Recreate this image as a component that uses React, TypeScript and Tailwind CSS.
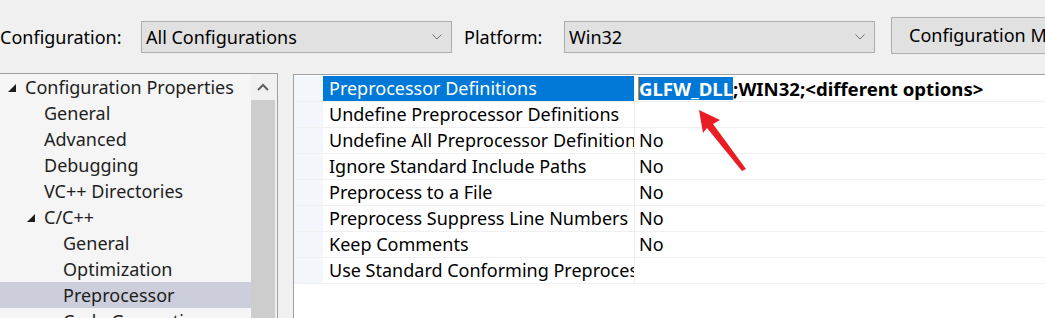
import { ReactNode } from 'react';

const font = { fontFamily: '"Noto Sans", "Open Sans", sans-serif' };

function Chevron() {
  return (
    <svg width="10" height="6" viewBox="0 0 10 6" fill="none" stroke="#707070" strokeWidth="1">
      <path d="M0.5 0.5L5 5L9.5 0.5" />
    </svg>
  );
}

function Expander() {
  return (
    <svg width="8" height="8" viewBox="0 0 8 8">
      <polygon points="8,0 8,8 0,8" fill="#1e1e1e" />
    </svg>
  );
}

function Select({ value }: { value: string }) {
  return (
    <div className="mt-[21px] h-[32px] w-[311px] shrink-0 bg-[#e1e1e1] border border-[#adadad] flex items-center justify-between pl-[4px] pr-[9px] text-[18px] text-black">
      <span>{value}</span>
      <Chevron />
    </div>
  );
}

function TreeRow({ indent, expander, selected, children }: { indent: string; expander?: string; selected?: boolean; children: ReactNode }) {
  return (
    <div className={`relative h-[26px] flex items-center text-[18px] text-[#1e1e1e] ${indent} ${selected ? 'bg-[#cccedb]' : ''}`}>
      {expander && (
        <span className={`absolute top-[10px] ${expander}`}>
          <Expander />
        </span>
      )}
      {children}
    </div>
  );
}

const props: [string, ReactNode][] = [
  ['Undefine Preprocessor Definitions', ''],
  ['Undefine All Preprocessor Definitions', 'No'],
  ['Ignore Standard Include Paths', 'No'],
  ['Preprocess to a File', 'No'],
  ['Preprocess Suppress Line Numbers', 'No'],
  ['Keep Comments', 'No'],
  ['Use Standard Conforming Preprocessor', ''],
];

export default function App() {
  return (
    <div className="relative w-[1045px] h-[318px] overflow-hidden bg-[#f0f0f0] text-black" style={font}>
      {/* toolbar */}
      <div className="h-[73px] flex items-start whitespace-nowrap">
        <div className="mt-[21px] h-[32px] w-[141px] shrink-0 flex items-center text-[18px]">Configuration:</div>
        <Select value="All Configurations" />
        <div className="mt-[21px] ml-[12px] h-[32px] w-[100px] shrink-0 flex items-center text-[18px]">Platform:</div>
        <Select value="Win32" />
        <div className="mt-[17px] ml-[16px] h-[37px] shrink-0 bg-[#e1e1e1] border border-[#adadad] flex items-center pl-[17px] pr-[17px] text-[18px]">
          Configuration Manager...
        </div>
      </div>

      <div className="flex h-[245px]">
        {/* tree */}
        <div className="w-[278px] shrink-0 flex border-t border-r border-[#a0a0a0] bg-[#f5f5f5]">
          <div className="w-[251px] shrink-0 whitespace-nowrap overflow-hidden">
            <TreeRow indent="pl-[25px]" expander="left-[8px]">Configuration Properties</TreeRow>
            <TreeRow indent="pl-[44px]">General</TreeRow>
            <TreeRow indent="pl-[44px]">Advanced</TreeRow>
            <TreeRow indent="pl-[44px]">Debugging</TreeRow>
            <TreeRow indent="pl-[44px]">VC++ Directories</TreeRow>
            <TreeRow indent="pl-[44px]" expander="left-[27px]">C/C++</TreeRow>
            <TreeRow indent="pl-[63px]">General</TreeRow>
            <TreeRow indent="pl-[63px]">Optimization</TreeRow>
            <TreeRow indent="pl-[63px]" selected>Preprocessor</TreeRow>
            <TreeRow indent="pl-[63px]">Code Generation</TreeRow>
          </div>
          <div className="w-[26px] shrink-0 bg-[#f0f0f0] flex flex-col">
            <div className="h-[26px] w-[24px] flex items-center justify-center">
              <svg width="12" height="8" viewBox="0 0 12 8" fill="none" stroke="#606060" strokeWidth="2">
                <path d="M1 7L6 2L11 7" />
              </svg>
            </div>
            <div className="flex-1 w-[24px] bg-[#cdcdcd]" />
          </div>
        </div>

        {/* property grid */}
        <div className="ml-[15px] mt-[1px] flex-1 border-t border-l border-[#a0a0a0] bg-white pt-[1px]">
          <div className="flex h-[26px] border-b border-[#f0f0f0]">
            <div className="w-[29px] shrink-0 bg-[#f3f6fb]" />
            <div className="w-[312px] shrink-0 bg-[#0078d7] text-white text-[18px] pl-[6px] flex items-center border-r border-[#f0f0f0] whitespace-nowrap overflow-hidden">
              Preprocessor Definitions
            </div>
            <div className="flex-1 flex items-center pl-[3px] text-[18.6px] font-bold whitespace-nowrap">
              <span className="border-l border-[#f07a10] bg-[#0078d7] text-white leading-[23px]">GLFW_DLL</span>
              <span>;WIN32;&lt;different options&gt;</span>
            </div>
          </div>
          {props.map(([name, value]) => (
            <div key={name} className="flex h-[26px] border-b border-[#f0f0f0]">
              <div className="w-[29px] shrink-0 bg-[#f3f6fb]" />
              <div className="w-[312px] shrink-0 text-[18px] pl-[6px] flex items-center border-r border-[#f0f0f0] whitespace-nowrap overflow-hidden">
                {name}
              </div>
              <div className="flex-1 flex items-center pl-[4px] text-[18px]">{value}</div>
            </div>
          ))}
        </div>
      </div>

      {/* red annotation arrow */}
      <svg className="absolute left-0 top-0 pointer-events-none" width="1045" height="318">
        <polygon points="699,110 720,120 713,124 746,169 742,171 707,128 703,133" fill="#ea1c24" />
      </svg>
    </div>
  );
}
